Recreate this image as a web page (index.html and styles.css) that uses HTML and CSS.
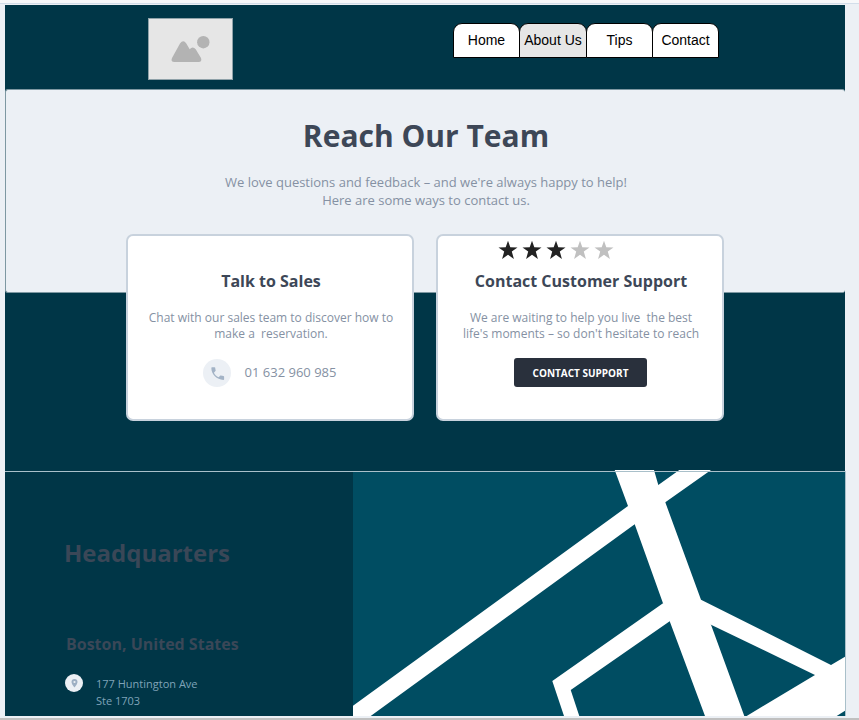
FILE: index.html
```html
<!DOCTYPE html>
<html lang="en">
<head>
<meta charset="utf-8">
<title>Reach Our Team</title>
<link rel="stylesheet" href="styles.css">
</head>
<body>
<div class="topline"></div>
<main class="page">
  <header class="header">
    <svg class="logo" viewBox="0 0 85 62" role="img" aria-label="Logo">
      <rect x=".5" y=".5" width="84" height="61" fill="#e6e6e6" stroke="#8fa1a8"/>
      <circle cx="55.3" cy="24.2" r="6.2" fill="#b3b3b3"/>
      <path d="M24 40 L32 25.500Q35.300 21 38.300 25.500L41.700 31.300Q44.700 27.500 47.700 31.300L53 40Q54.300 44 50.500 44H26.500Q22.300 44 24 40Z" fill="#b3b3b3"/>
    </svg>
    <nav class="tabs">
      <a class="tab">Home</a>
      <a class="tab active">About Us</a>
      <a class="tab">Tips</a>
      <a class="tab">Contact</a>
    </nav>
  </header>
  <section class="hero">
    <h1>Reach Our Team</h1>
    <p>We love questions and feedback – and we're always happy to help!<br>Here are some ways to contact us.</p>
  </section>
  <section class="cards">
    <article class="card">
      <div class="stars"></div>
      <h2>Talk to Sales</h2>
      <p>Chat with our sales team to discover how to<br>make a&nbsp; reservation.</p>
      <div class="phone">
        <svg viewBox="0 0 28 28" width="28" height="28"><circle cx="14" cy="14" r="14" fill="#ecf0f5"/><path transform="translate(6.200 6) scale(.71)" d="M6.620 10.790c1.440 2.830 3.760 5.140 6.590 6.590l2.200-2.200c.27-.27.67-.36 1.020-.24 1.120.37 2.330.57 3.570.57.55 0 1 .45 1 1V20c0 .55-.45 1-1 1-9.390 0-17-7.610-17-17 0-.55.45-1 1-1h3.500c.55 0 1 .45 1 1 0 1.250.2 2.450.57 3.570.11.350.03.740-.25 1.020z" fill="#a3b3c6"/></svg>
        <span>01 632 960 985</span>
      </div>
    </article>
    <article class="card">
      <div class="stars">
        <svg viewBox="0 0 116 20" width="116" height="20">
          <defs><path id="star" d="M10 .8L12.300 7.200L19.500 7.400L13.800 11.600L15.900 18.900L10 14.700L4.100 18.900L6.200 11.600L.5 7.400L7.700 7.200Z"/></defs>
          <g fill="#222"><use href="#star"/><use href="#star" x="24"/><use href="#star" x="48"/></g>
          <g fill="#c0c0c0"><use href="#star" x="72"/><use href="#star" x="96"/></g>
        </svg>
      </div>
      <h2>Contact Customer Support</h2>
      <p>We are waiting to help you live&nbsp; the best<br>life's moments – so don't hesitate to reach</p>
      <a class="button">CONTACT SUPPORT</a>
    </article>
  </section>
  <section class="location">
    <div class="address">
      <h2>Headquarters</h2>
      <h3>Boston, United States</h3>
      <div class="street">
        <svg viewBox="0 0 18 18" width="18" height="18"><circle cx="9" cy="9" r="9" fill="#ecf0f5"/><path fill-rule="evenodd" d="M9.500 5a3 3 0 0 0-3 3c0 2.200 3 5.500 3 5.500s3-3.300 3-5.500a3 3 0 0 0-3-3Zm0 1.900a1.100 1.100 0 1 1 0 2.200a1.100 1.100 0 0 1 0-2.200Z" fill="#9dafc3"/></svg>
        <p>177 Huntington Ave<br>Ste 1703</p>
      </div>
    </div>
    <svg class="map" viewBox="353 470 493 246">
      <g fill="#fff">
        <path d="M614.700 470H654L658.300 485L665.300 502.300L701 599.700L711 624.700L744.300 716H705L669.700 621.300L663 603.300L634.700 524.300L628 506Z"/>
        <path d="M679.300 470L658.300 485L628 506L353 705.700V716H370.700L634.700 524.300L665.300 502.300L711 470Z"/>
        <path d="M663 603.300L552.300 681L564 716H579.300L570.700 690L669.700 621.300L680 610Z"/>
        <path d="M690 605L701 599.700L831 665L845 656.700V710.700L836.700 716H740L746.700 716L815 675L711 624.700Z"/>
      </g>
      <path d="M353 471.500H845.500V716" fill="none" stroke="#a9c0ca"/>
    </svg>
  </section>
</main>
<div class="bottomline"></div>
</body>
</html>
```

FILE: styles.css
```css
* { box-sizing: border-box; }
body {
  margin: 0;
  height: 720px;
  overflow: hidden;
  background: #ecf0f5;
  font-family: "Open Sans", sans-serif;
}
h1, h2, h3, p { margin: 0; }
svg { display: block; flex: none; }
.topline {
  height: 4px;
  margin-bottom: 1px;
  background: #f7f8fa;
  border-bottom: 1px solid #d3deea;
}
.page {
  width: 841px;
  height: 711px;
  margin-left: 5px;
  background: linear-gradient(#003647, #003647) 0 0 / 840px 100% no-repeat;
}
.header {
  height: 84px;
  display: flex;
  justify-content: space-between;
  padding: 13px 128px 0 143px;
}
.logo { width: 85px; height: 62px; }
.tabs {
  display: flex;
  height: 35px;
  margin-top: 5px;
  font: 14px/33px "Liberation Sans", sans-serif;
}
.tab {
  width: 67px;
  margin-right: -1px;
  border: 1px solid #000;
  border-radius: 9px 9px 0 0;
  background: #fff;
  color: #000;
  text-align: center;
}
.tab.active { width: 68px; background: #e6e6e6; }
.hero {
  width: 840px;
  height: 204px;
  padding: 25px 0 0 1px;
  border: 1px solid #7e98a2;
  border-right: 0;
  border-radius: 3px;
  background: #ecf0f5;
  text-align: center;
}
.hero h1 {
  font-size: 30px;
  line-height: 42px;
  color: #3d4757;
}
.hero p {
  margin-top: 16px;
  font-size: 13px;
  line-height: 18px;
  color: #8591a3;
}
.cards {
  display: flex;
  gap: 22px;
  margin: -59px 0 0 121px;
}
.card {
  width: 288px;
  height: 187px;
  border: 2px solid #c8d2dd;
  border-radius: 7px;
  background: #fff;
  display: flex;
  flex-direction: column;
  align-items: center;
  text-align: center;
}
.stars { height: 33px; padding: 4px 48px 0 0; }
.card h2 {
  padding-left: 2px;
  font-size: 16px;
  line-height: 24px;
  color: #3d4757;
}
.card p {
  margin-top: 17px;
  padding-left: 2px;
  font-size: 12px;
  line-height: 16px;
  color: #8591a3;
  white-space: nowrap;
}
.phone {
  display: flex;
  align-items: center;
  gap: 14px;
  margin-top: 17px;
  padding-right: 1px;
  font-size: 13px;
  line-height: 18px;
  color: #8591a3;
}
.phone span { padding-bottom: 2px; }
.button {
  width: 133px;
  height: 29px;
  margin-top: 16px;
  padding-left: 1px;
  border-radius: 3px;
  background: #29303c;
  color: #fff;
  font-size: 10px;
  font-weight: 700;
  line-height: 30px;
}
.location {
  display: flex;
  height: 246px;
  margin-top: 49px;
}
.address {
  width: 348px;
  flex: none;
  padding: 66px 0 0 59px;
  background: linear-gradient(#a9c0ca, #a9c0ca) 0 1px / 100% 1px no-repeat;
}
.address h2, .address h3 { color: #3a4757; }
.address h2 { font-size: 24px; line-height: 34px; }
.address h3 { margin: 62px 0 0 2px; font-size: 16px; line-height: 24px; }
.street {
  display: flex;
  gap: 12px;
  margin: 18px 0 0 1px;
  font-size: 11px;
  line-height: 17px;
  color: #7fa3b8;
}
.street p { padding: 1px 0 0 1px; }
.map {
  width: 493px;
  height: 246px;
  background: linear-gradient(#004d62, #004d62) 0 1px / 492px 100% no-repeat;
}
.bottomline {
  height: 2px;
  margin-top: 2px;
  background: #c0c0c0;
}
```
